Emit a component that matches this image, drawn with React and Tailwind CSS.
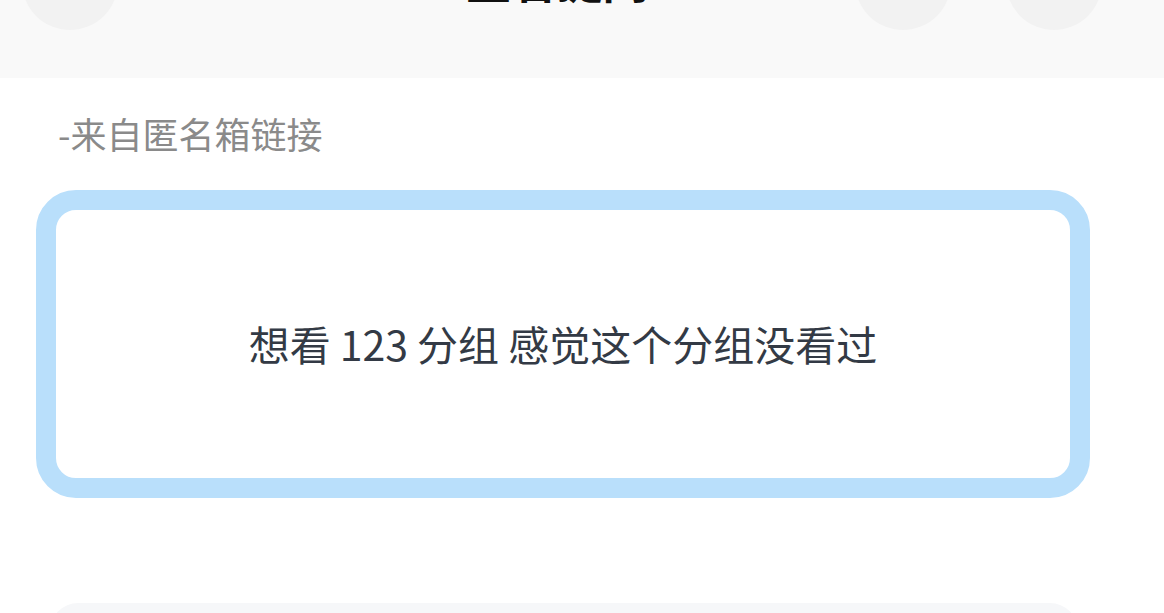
import React from "react";

const font = { fontFamily: '"Noto Sans CJK SC", "Noto Sans", sans-serif' };

const RoundButton = ({ className = "" }) => (
  <div className={`h-[96px] w-[96px] shrink-0 rounded-full bg-[#f2f2f2] ${className}`} />
);

const App = () => {
  return (
    <div className="h-[613px] w-[1164px] overflow-hidden bg-white" style={font}>
      {/* top bar, scrolled partly out of view */}
      <div className="h-[78px] overflow-hidden bg-[#f9f9f9]">
        <div className="mt-[-66px] flex items-end pl-[22px] pr-[62px]">
          <RoundButton />
          <div className="flex flex-1 justify-center pl-[140px]">
            <span className="mb-[29px] text-[46px] font-bold leading-none text-[#111]">匿名提问</span>
          </div>
          <div className="flex gap-[55px]">
            <RoundButton />
            <RoundButton />
          </div>
        </div>
      </div>

      <div className="pl-[36px]">
        <div className="mt-[30px] pl-[22px] text-[36px] leading-[50px] text-[#8a8a8a]">-来自匿名箱链接</div>

        <div className="mt-[32px] flex h-[308px] w-[1054px] items-center justify-center rounded-[40px] border-[20px] border-[#b9dffb] bg-white">
          <p className="mb-[2px] text-[41px] leading-none text-[#333a45]">
            想看<span className="mx-[9px]">123</span>分组 感觉这个分组没看过
          </p>
        </div>

        <div className="ml-[14px] mt-[105px] h-[60px] w-[1028px] rounded-t-[28px] bg-[#f6f7f9]" />
      </div>
    </div>
  );
};

export default App;
